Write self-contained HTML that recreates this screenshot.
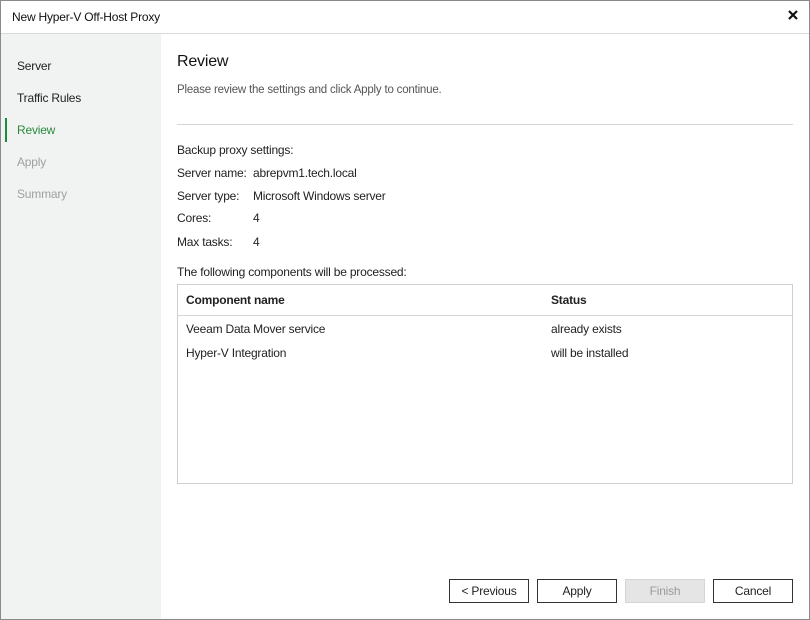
<!DOCTYPE html>
<html><head><meta charset="utf-8"><style>
*{margin:0;padding:0;box-sizing:border-box}
body{width:810px;height:620px;background:#fff;font-family:"Liberation Sans",sans-serif;font-size:12px;color:#222;position:relative;overflow:hidden;letter-spacing:-0.2px}
.win{position:absolute;left:0;top:0;width:810px;height:620px;border:1px solid #8a8a8a}
.title{position:absolute;left:12px;top:10px;font-size:12px;color:#111}
.tline{position:absolute;left:1px;right:1px;top:33px;height:1px;background:#d9d9d9}
.side{position:absolute;left:1px;top:34px;width:160px;bottom:1px;background:#f1f2f2}
.side div{position:absolute;left:16px}
.t{position:absolute;white-space:nowrap}
.btn{position:absolute;top:579px;height:24px;border:1px solid #333;background:#fff;text-align:center;line-height:22px}
</style></head><body>
<div class="win"></div>
<div class="title">New Hyper-V Off-Host Proxy</div>
<svg style="position:absolute;left:787px;top:9px" width="12" height="12" viewBox="0 0 12 12"><path d="M2 2L10 10M10 2L2 10" stroke="#111" stroke-width="2.2"/></svg>
<div class="tline"></div>
<div class="side">
<div style="top:25px">Server</div>
<div style="top:57px">Traffic Rules</div>
<div style="top:89px;color:#2a8a3e">Review</div>
<div style="top:121px;color:#a0a0a0">Apply</div>
<div style="top:153px;color:#a0a0a0">Summary</div>
</div>
<div style="position:absolute;left:5px;top:118px;width:2px;height:24px;background:#1f8a3c"></div>
<div class="t" style="left:177px;top:53px;font-size:16px;color:#111">Review</div>
<div class="t" style="left:177px;top:84px;font-size:11.5px;color:#555">Please review the settings and click Apply to continue.</div>
<div style="position:absolute;left:177px;top:124px;width:616px;height:1px;background:#d6d6d6"></div>
<div class="t" style="left:177px;top:143px">Backup proxy settings:</div>
<div class="t" style="left:177px;top:166px">Server name:</div><div class="t" style="left:253px;top:166px">abrepvm1.tech.local</div>
<div class="t" style="left:177px;top:189px">Server type:</div><div class="t" style="left:253px;top:189px">Microsoft Windows server</div>
<div class="t" style="left:177px;top:211px">Cores:</div><div class="t" style="left:253px;top:211px">4</div>
<div class="t" style="left:177px;top:235px">Max tasks:</div><div class="t" style="left:253px;top:235px">4</div>
<div class="t" style="left:177px;top:265px">The following components will be processed:</div>
<div style="position:absolute;left:177px;top:284px;width:616px;height:200px;border:1px solid #cfcfcf"></div>
<div style="position:absolute;left:178px;top:315px;width:614px;height:1px;background:#d6d6d6"></div>
<div class="t" style="left:186px;top:293px;font-weight:bold">Component name</div>
<div class="t" style="left:551px;top:293px;font-weight:bold">Status</div>
<div class="t" style="left:186px;top:322px">Veeam Data Mover service</div>
<div class="t" style="left:551px;top:322px">already exists</div>
<div class="t" style="left:186px;top:346px">Hyper-V Integration</div>
<div class="t" style="left:551px;top:346px">will be installed</div>
<div class="btn" style="left:449px;width:80px">&lt; Previous</div>
<div class="btn" style="left:537px;width:80px">Apply</div>
<div class="btn" style="left:625px;width:80px;background:#e5e5e5;border-color:#d5d5d5;color:#9a9a9a">Finish</div>
<div class="btn" style="left:713px;width:80px">Cancel</div>
</body></html>
